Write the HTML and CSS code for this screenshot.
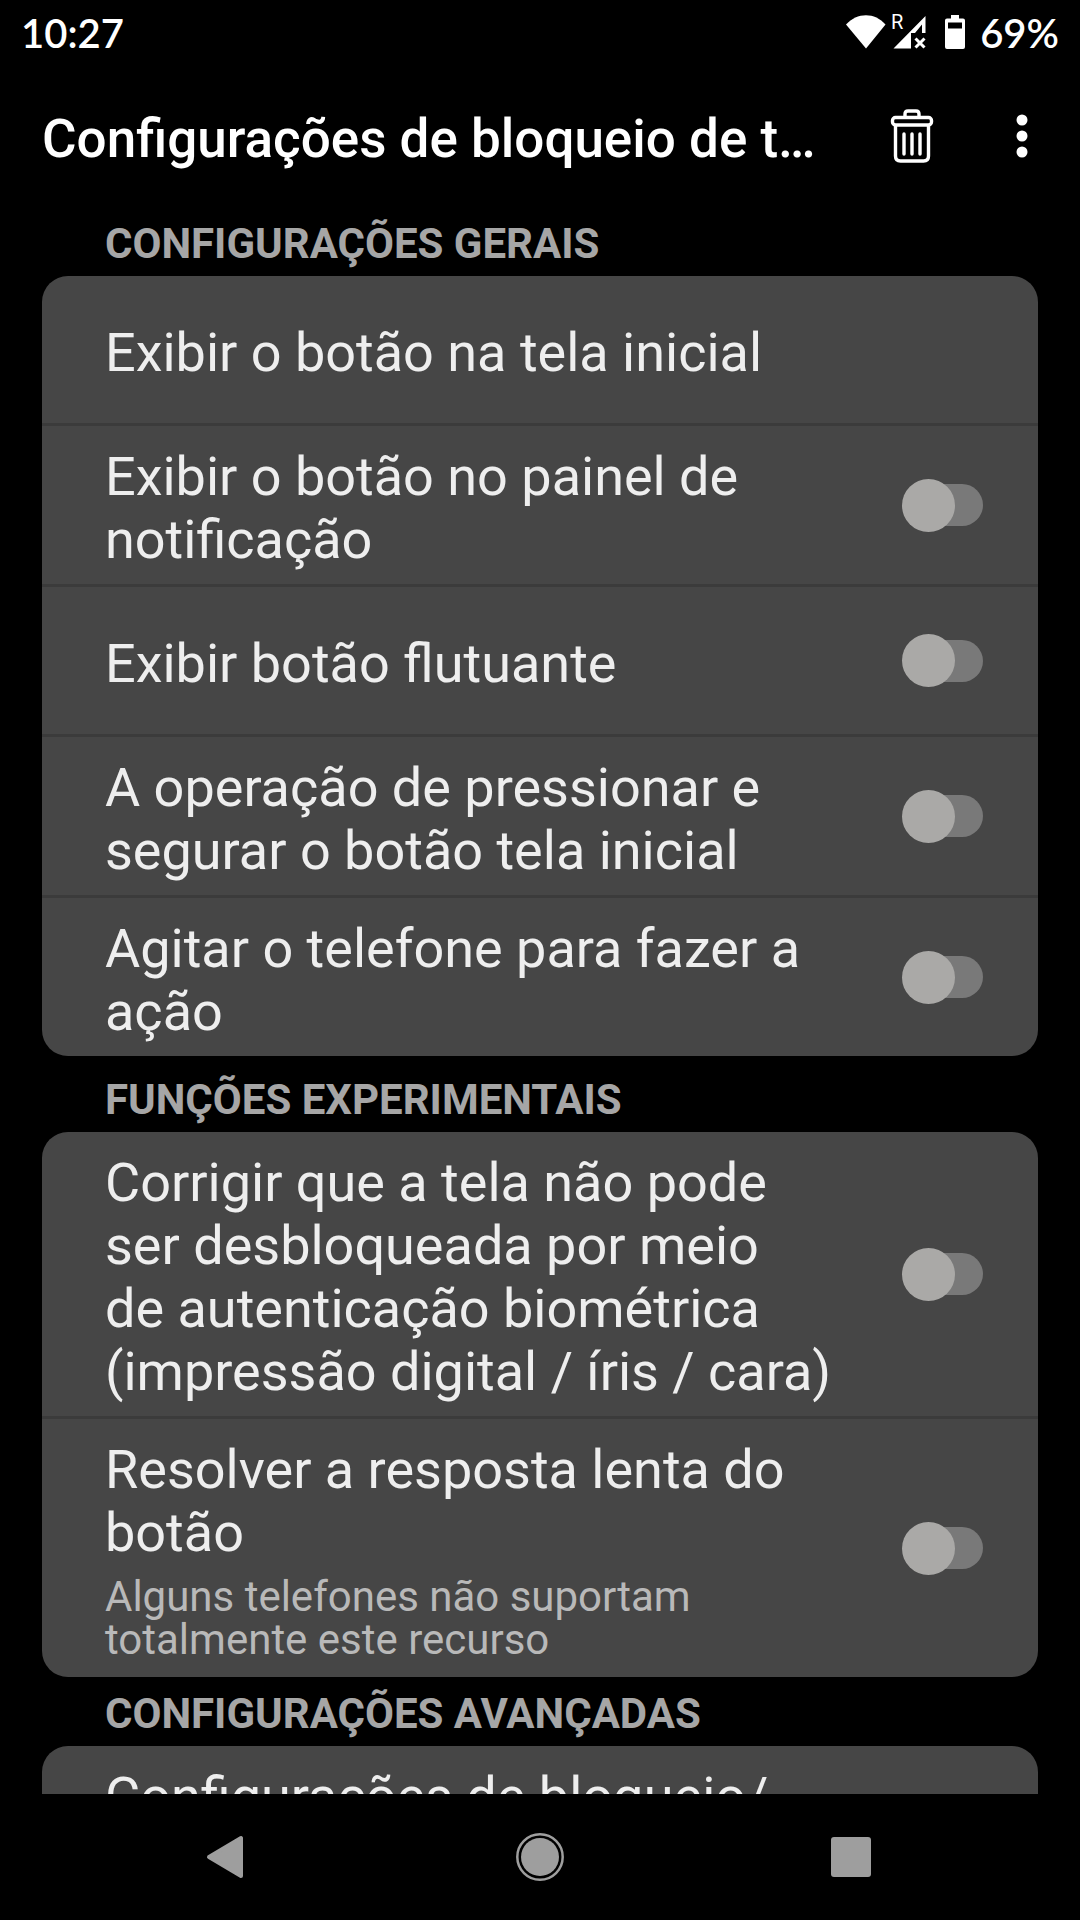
FILE: index.html
```html
<!DOCTYPE html>
<html lang="pt-BR">
<head>
<meta charset="utf-8">
<meta name="viewport" content="width=device-width, initial-scale=1">
<title>Configurações de bloqueio de t…</title>
<link rel="stylesheet" href="styles.css">
</head>
<body>
<div class="status">
  <span class="status-text">10:27</span>
  <div class="status-icons">
    <svg class="wifi" width="40" height="34" viewBox="0 0 40 34" aria-hidden="true"><path d="M0 9.500C11-3 29-3 39.500 9.500L20 33.500z" fill="currentColor"/></svg>
    <svg class="signal" width="36" height="34" viewBox="0 0 36 34" aria-hidden="true">
      <text class="roaming" x="0" y="14">R</text>
      <path d="M2.500 33.500L34.500 1v17h-3.500V9.500L24 18h-4v15.500z" fill="currentColor"/>
      <path d="M24.500 23.500l9 9m0-9l-9 9" fill="none" stroke="currentColor" stroke-width="3"/>
    </svg>
    <svg class="battery" width="20" height="34" viewBox="0 0 20 34" aria-hidden="true"><path d="M6 0h8v3.500h4q2 0 2 2V32q0 2-2 2H2q-2 0-2-2V5.500q0-2 2-2h4zM3 7.500v6h14v-6z" fill="currentColor" fill-rule="evenodd"/></svg>
    <span class="status-text">69%</span>
  </div>
</div>

<header class="appbar">
  <h1 class="title">Configurações de bloqueio de t…</h1>
  <button class="icon-button" type="button" aria-label="Excluir">
    <svg width="44" height="54" viewBox="0 0 44 54" fill="none" stroke="currentColor" stroke-width="3.400" stroke-linecap="round">
      <path d="M15 8V5q0-3 3-3h8q3 0 3 3v3"/>
      <rect x="2.500" y="8.500" width="39" height="7.500" rx="3"/>
      <path d="M5.500 16.500V47q0 5 5 5h23q5 0 5-5V16.500M14 25v20M22 25v20M30 25v20"/>
    </svg>
  </button>
  <button class="icon-button" type="button" aria-label="Mais opções">
    <svg width="12" height="44" viewBox="0 0 12 44" fill="currentColor"><circle cx="6" cy="6" r="5.500"/><circle cx="6" cy="22" r="5.500"/><circle cx="6" cy="38" r="5.500"/></svg>
  </button>
</header>

<main class="list">
  <section class="section">
    <h2 class="heading">CONFIGURAÇÕES GERAIS</h2>
    <div class="card">
      <button class="row" type="button"><span class="text">Exibir o botão na tela inicial</span></button>
      <label class="row"><span class="text">Exibir o botão no painel de notificação</span><input class="switch" type="checkbox"></label>
      <label class="row"><span class="text">Exibir botão flutuante</span><input class="switch" type="checkbox"></label>
      <label class="row"><span class="text">A operação de pressionar e segurar o botão tela inicial</span><input class="switch" type="checkbox"></label>
      <label class="row"><span class="text">Agitar o telefone para fazer a ação</span><input class="switch" type="checkbox"></label>
    </div>
  </section>
  <section class="section section-spaced">
    <h2 class="heading">FUNÇÕES EXPERIMENTAIS</h2>
    <div class="card">
      <label class="row"><span class="text">Corrigir que a tela não pode ser desbloqueada por meio<br>de autenticação biométrica (impressão digital / íris / cara)</span><input class="switch" type="checkbox"></label>
      <label class="row"><span class="text">Resolver a resposta lenta do botão<span class="summary">Alguns telefones não suportam totalmente este recurso</span></span><input class="switch" type="checkbox"></label>
    </div>
  </section>
  <section class="section">
    <h2 class="heading">CONFIGURAÇÕES AVANÇADAS</h2>
    <div class="card">
      <button class="row row-top" type="button"><span class="text">Configurações de bloqueio/</span></button>
    </div>
  </section>
</main>

<nav class="navbar">
  <button class="nav-button" type="button" aria-label="Voltar"><svg width="48" height="48" viewBox="0 0 48 48"><path d="M4 24L36 5v38z" fill="currentColor" stroke="currentColor" stroke-width="4" stroke-linejoin="round"/></svg></button>
  <button class="nav-button" type="button" aria-label="Início"><svg width="48" height="48" viewBox="0 0 48 48"><circle cx="24" cy="24" r="22.700" fill="none" stroke="currentColor" stroke-width="2.500"/><circle cx="24" cy="24" r="19" fill="currentColor"/></svg></button>
  <button class="nav-button" type="button" aria-label="Recentes"><svg width="48" height="48" viewBox="0 0 48 48"><rect x="4" y="4" width="40" height="40" rx="3" fill="currentColor"/></svg></button>
</nav>
</body>
</html>
```
FILE: styles.css
```css
* { box-sizing: border-box; }

body {
  margin: 0;
  height: 100vh;
  display: flex;
  flex-direction: column;
  overflow: hidden;
  background: #000;
  color: #fff;
  font-family: Roboto, "Liberation Sans", sans-serif;
}

button {
  border: 0;
  padding: 0;
  background: none;
  color: inherit;
  font: inherit;
  text-align: left;
}

svg { display: block; }

.status {
  flex: none;
  height: 64px;
  padding: 0 21px;
  display: flex;
  align-items: center;
  justify-content: space-between;
}
.status-text {
  padding-top: 2px;
  font: 600 40px/48px Lato, sans-serif;
}
.status-icons {
  display: flex;
  align-items: center;
}
.signal {
  margin: 0 18px 0 5px;
  overflow: visible;
}
.battery { margin-right: 15px; }
.roaming {
  fill: currentColor;
  font: 20px Roboto, sans-serif;
}

.appbar {
  flex: none;
  height: 144px;
  padding: 0 42px;
  display: flex;
  align-items: center;
}
.title {
  flex: 1;
  min-width: 0;
  margin: 0 48px 0 0;
  padding-top: 6px;
  overflow: hidden;
  white-space: nowrap;
  text-overflow: ellipsis;
  font-size: 53px;
  line-height: 64px;
  font-weight: 500;
}
.icon-button {
  flex: none;
  width: 44px;
  display: flex;
  justify-content: center;
}
.icon-button + .icon-button {
  width: 32px;
  margin-left: 72px;
}

.list {
  flex: 1;
  min-height: 0;
  overflow: hidden;
  padding: 11px 42px 0;
}
.section { margin-bottom: 12px; }
.section-spaced { margin-top: 19px; }
.heading {
  margin: 0;
  padding: 0 63px 8px;
  color: #a6a6a6;
  font-size: 42px;
  line-height: 49px;
  font-weight: 700;
}
.card {
  border-radius: 26px;
  background: #464646;
}
.row {
  width: 100%;
  min-height: 147px;
  padding: 0 55px 0 63px;
  display: flex;
  align-items: center;
  justify-content: space-between;
  color: #eee;
  font-size: 54px;
  line-height: 63px;
}
.row-top { align-items: flex-start; }
.row + .row {
  border-top: 3px solid #3b3b3b;
  min-height: 150px;
}
.text {
  max-width: 735px;
  padding: 19px 0 13px;
}
.summary {
  display: block;
  padding: 11px 0 3px;
  color: #b9b9b9;
  font-size: 42px;
  line-height: 43px;
}

.switch {
  appearance: none;
  flex: none;
  display: grid;
  align-items: center;
  width: 81px;
  height: 53px;
  margin: 0;
}
.switch::before,
.switch::after {
  content: "";
  grid-area: 1 / 1;
}
.switch::before {
  height: 42px;
  margin-left: 5px;
  border-radius: 21px;
  background: #797979;
}
.switch::after {
  width: 53px;
  height: 53px;
  border-radius: 50%;
  background: #aaa9a7;
}

.navbar {
  flex: none;
  height: 126px;
  padding: 0 73px;
  display: grid;
  grid-template-columns: repeat(3, 1fr);
  color: #9e9e9e;
}
.nav-button {
  display: flex;
  align-items: center;
  justify-content: center;
}
```
